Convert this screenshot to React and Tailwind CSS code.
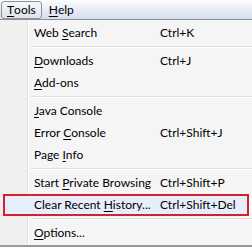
import React from "react";

const items = [
  { pre: "Web ", key: "S", post: "earch", shortcut: "Ctrl+K" },
  "sep",
  { pre: "", key: "D", post: "ownloads", shortcut: "Ctrl+J" },
  { pre: "", key: "A", post: "dd-ons", shortcut: "" },
  "sep",
  { pre: "", key: "J", post: "ava Console", shortcut: "" },
  { pre: "Error ", key: "C", post: "onsole", shortcut: "Ctrl+Shift+J" },
  { pre: "Page ", key: "I", post: "nfo", shortcut: "" },
  "sep",
  { pre: "Start ", key: "P", post: "rivate Browsing", shortcut: "Ctrl+Shift+P" },
  { pre: "Clear Recent ", key: "H", post: "istory...", shortcut: "Ctrl+Shift+Del", active: true },
  "sep",
  { pre: "", key: "O", post: "ptions...", shortcut: "" },
];

const MenuRow = ({ item }) => {
  if (item === "sep") {
    return (
      <div className="flex h-[6px] items-center pl-[30px]">
        <div className="w-full border-t border-[#e0e0e0] border-b border-b-white" />
      </div>
    );
  }
  return (
    <div
      className={
        item.active
          ? "mx-[3px] flex h-[22px] items-center border-2 border-[#d4202f] bg-[#e6eef9] pl-[29px]"
          : "mx-[3px] flex h-[22px] items-center pl-[31px]"
      }
    >
      <span className="w-[126px] whitespace-nowrap">
        {item.pre}
        <span className="underline underline-offset-2">{item.key}</span>
        {item.post}
      </span>
      <span className="whitespace-nowrap">{item.shortcut}</span>
    </div>
  );
};

const App = () => {
  return (
    <div
      className="w-[252px] h-[247px] overflow-hidden bg-[#f0f0f0] text-[12px] text-black"
      style={{ fontFamily: 'Lato, "Noto Sans", sans-serif' }}
    >
      {/* Menu bar */}
      <div className="flex h-[20px] items-start border-b border-[#8c9097] bg-gradient-to-b from-[#fbfcfe] to-[#d5deec] pt-[1px] pl-[1px]">
        <div className="flex h-[18px] items-center rounded-[3px] border border-[#8e9196] bg-gradient-to-b from-[#f4f6f9] to-[#dfe4ec] px-[5px]">
          <span className="underline underline-offset-2">T</span>ools
        </div>
        <div className="flex h-[18px] items-center px-[7px]">
          <span className="underline underline-offset-2">H</span>elp
        </div>
      </div>

      {/* Dropdown */}
      <div className="relative h-[227px] border-b-2 border-[#9a9a9a] bg-[#f5f5f5] pt-[2px]">
        <div className="absolute left-[27px] top-0 h-full w-[1px] bg-[#e2e3e3]" />
        <div className="absolute left-[28px] top-0 h-full w-[1px] bg-white" />
        <div className="absolute left-0 top-0 h-full w-[27px] bg-[#f0f0f0]" />
        <div className="relative">
          {items.map((item, i) => (
            <MenuRow key={i} item={item} />
          ))}
        </div>
      </div>
    </div>
  );
};

export default App;
